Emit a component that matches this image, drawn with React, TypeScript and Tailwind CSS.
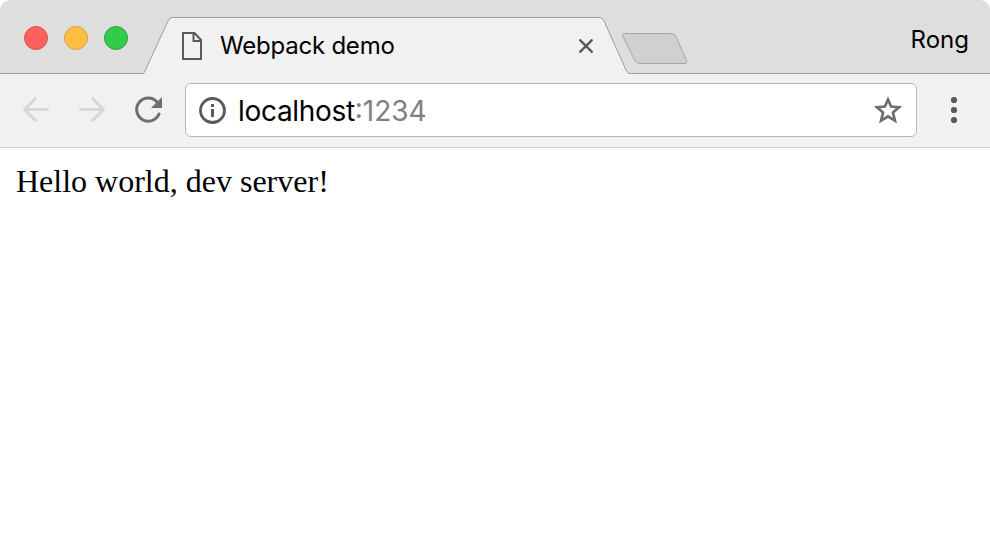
function TrafficLights() {
  return (
    <div className="flex gap-4 pl-6 pt-[26px]">
      <span className="size-6 rounded-full border border-[#e2504b] bg-[#fc625d]" />
      <span className="size-6 rounded-full border border-[#dfa03b] bg-[#fdbf41]" />
      <span className="size-6 rounded-full border border-[#27a535] bg-[#34ca4b]" />
    </div>
  );
}

function Tab() {
  return (
    <div className="relative ml-4 mt-[15px] h-[59px] w-[486px]">
      <svg className="absolute inset-0" width="486" height="59" viewBox="0 0 486 59" fill="none">
        <path d="M-1 58.500Q0 58.500 1 56L24 6Q25.500 2.500 28.500 2.500H455.500Q458.500 2.500 460 6L482.500 56Q484 58.500 486 58.500V59H-1Z" fill="#f1f1f1" />
        <path d="M-1 58.500Q0 58.500 1 56L24 6Q25.500 2.500 28.500 2.500H455.500Q458.500 2.500 460 6L482.500 56Q484 58.500 486 58.500" stroke="#9b9b9b" />
      </svg>
      <div className="relative flex h-full items-start pl-[38px]">
        <svg className="mt-[17px]" width="20" height="28" viewBox="0 0 20 28" fill="none" stroke="#5a5a5a" strokeWidth="2">
          <path d="M1 1H12.500L19 8V27H1ZM11.500 1V9H19" />
        </svg>
        <span className="ml-[18px] mt-[15px] w-[359px] whitespace-nowrap text-[24px] leading-[32px] tracking-[-0.22px]">Webpack demo</span>
        <svg className="mt-6" width="14" height="14" viewBox="0 0 14 14" stroke="#5a5a5a" strokeWidth="2.400">
          <path d="M.5.500 13.500 13.500M13.500.500.500 13.500" />
        </svg>
      </div>
    </div>
  );
}

function Toolbar() {
  return (
    <div className="flex h-[74px] items-start border-b border-[#d2d2d2] bg-[#f1f1f1]">
      <svg className="ml-[22px] mt-[22px]" width="28" height="28" viewBox="0 0 28 28" fill="none" stroke="#d6d6d6" strokeWidth="3" strokeLinecap="round">
        <path d="M25.500 13.500H3M13.500 2.500 2.500 13.500 13.500 24.500" />
      </svg>
      <svg className="ml-7 mt-[22px]" width="28" height="28" viewBox="0 0 28 28" fill="none" stroke="#d6d6d6" strokeWidth="3" strokeLinecap="round">
        <path d="M2.500 13.500H25M14.500 2.500 25.500 13.500 14.500 24.500" />
      </svg>
      <svg className="ml-[28px] mt-[22px]" width="30" height="30" viewBox="0 0 30 30" fill="none">
        <path d="M23.200 6.200A11.600 11.600 0 1 0 25 18" stroke="#6e6e6e" strokeWidth="3" strokeLinecap="round" />
        <path d="M28 1V12H17Z" fill="#6e6e6e" />
      </svg>
      <div className="ml-[21px] mt-[9px] flex h-[54px] w-[732px] items-center rounded-[6px] border border-[#b6b6b6] bg-white pl-[12px] pr-[13px]">
        <svg width="29" height="28" viewBox="0 0 29 28" fill="none">
          <circle cx="14.500" cy="14.500" r="12" stroke="#5a5a5a" strokeWidth="2.800" />
          <path d="M13 8h3v3h-3zM13 13h3v8h-3z" fill="#5a5a5a" />
        </svg>
        <span className="ml-[11px] mt-0.5 flex-1 whitespace-nowrap text-[28px] leading-[36px] tracking-[-0.32px]">
          localhost<span className="tracking-normal text-[#808080]">:1234</span>
        </span>
        <svg width="30" height="28" viewBox="0 0 30 28" fill="none">
          <path d="M15 3.500 18.100 10.500 26 11.200 20 16.500 21.900 24.600 15 20.400 8.100 24.600 10 16.500 4 11.200 11.900 10.500Z" stroke="#6e6e6e" strokeWidth="2.700" />
        </svg>
      </div>
      <svg className="ml-[33px] mt-[22px]" width="8" height="28" viewBox="0 0 8 28" fill="#5a5a5a">
        <circle cx="4" cy="4" r="3.100" />
        <circle cx="4" cy="14" r="3.100" />
        <circle cx="4" cy="24" r="3.100" />
      </svg>
    </div>
  );
}

export default function App() {
  return (
    <div className="h-[544px] w-[990px] overflow-hidden bg-white font-['Inter','Liberation_Sans',sans-serif] text-black">
      <header className="overflow-hidden rounded-t-[10px]">
        <div className="flex h-[74px] items-start bg-[#dedede] shadow-[inset_0_-1px_0_#9b9b9b]">
          <TrafficLights />
          <Tab />
          <svg className="-ml-2 mt-8" width="68" height="34" viewBox="0 0 68 34">
            <path d="M2.500 1.500H49.500Q52.500 1.500 54 4.500L64.500 28.500Q65.500 31.500 63 31.500H18Q14.500 31.500 12.500 28L.8 4Q-.2 1.500 2.500 1.500Z" fill="#d0d0d0" stroke="#a4a4a4" />
          </svg>
          <span className="ml-auto mr-[21px] mt-6 text-[24px] leading-[32px]">Rong</span>
        </div>
        <Toolbar />
      </header>
      <main className="px-4 pt-[15px] font-['Liberation_Serif',serif] text-[32px] leading-[36px]">Hello world, dev server!</main>
    </div>
  );
}
